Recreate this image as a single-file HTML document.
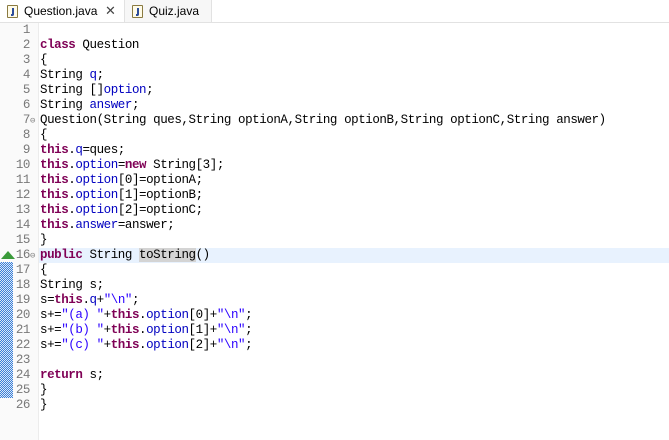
<!DOCTYPE html>
<html><head><style>
body{margin:0;width:669px;height:440px;background:#fff;overflow:hidden;position:relative;font-family:"Liberation Mono",monospace;}
.tabs{position:absolute;left:0;top:0;width:669px;height:22px;background:#fff;border-bottom:1px solid #e2e2e2;font-family:"Liberation Sans",sans-serif;font-size:12px;}
.tab{position:absolute;top:0;height:22px;line-height:22px;}
.t1{left:0;width:123px;background:#fff;}
.t2{left:124px;width:86px;background:#f7f7f7;border-left:1px solid #e2e2e2;border-right:1px solid #e2e2e2;}
.ic{position:absolute;top:5px;width:9px;height:11px;border:1px solid #8a7a40;background:#fffbe8;border-radius:1px;}
.ic:after{content:"";position:absolute;left:3px;top:2px;height:6px;border-right:2px solid #2d4d9a;border-bottom:2px solid #2d4d9a;border-radius:0 0 2px 0;width:1px;}
.gut{position:absolute;left:0;top:23px;width:38px;height:417px;background:#fafafa;border-right:1px solid #ececec;}
.range{position:absolute;left:0;top:262px;width:13px;height:136px;background-image:repeating-conic-gradient(#3b7fd6 0 25%,#dbe8f8 0 50%);background-size:2px 2px;}
.hl{position:absolute;left:39px;top:248px;width:630px;height:15px;background:#e8f2fe;}
.code{position:absolute;left:0;top:23px;font-size:12.5px;letter-spacing:-0.43px;line-height:15px;}
.ln{display:inline-block;width:30px;text-align:right;color:#787878;}
.l{height:15px;white-space:pre;}
.k{color:#7f0055;font-weight:bold;}
.f{color:#0000c0;}
.s{color:#2a00ff;}
.m{display:inline-block;width:10px;color:#888;font-size:9px;}
.sel{background:#d4d4d4;}
</style></head><body>
<div class="tabs">
<div class="tab t1"><span class="ic" style="left:7px"></span><span style="position:absolute;left:24px">Question.java</span><span style="position:absolute;left:105px;color:#444;font-size:13px">✕</span></div>
<div class="tab t2"><span class="ic" style="left:7px"></span><span style="position:absolute;left:24px">Quiz.java</span></div>
</div>
<div class="gut"></div>
<div class="hl"></div>
<div class="range"></div>
<div class="code"><div class="l"><span class="ln">1</span><span class="m"></span></div><div class="l"><span class="ln">2</span><span class="m"></span><span class="k">class</span> Question</div><div class="l"><span class="ln">3</span><span class="m"></span>{</div><div class="l"><span class="ln">4</span><span class="m"></span>String <span class="f">q</span>;</div><div class="l"><span class="ln">5</span><span class="m"></span>String []<span class="f">option</span>;</div><div class="l"><span class="ln">6</span><span class="m"></span>String <span class="f">answer</span>;</div><div class="l"><span class="ln">7</span><span class="m">⊖</span>Question(String ques,String optionA,String optionB,String optionC,String answer)</div><div class="l"><span class="ln">8</span><span class="m"></span>{</div><div class="l"><span class="ln">9</span><span class="m"></span><span class="k">this</span>.<span class="f">q</span>=ques;</div><div class="l"><span class="ln">10</span><span class="m"></span><span class="k">this</span>.<span class="f">option</span>=<span class="k">new</span> String[3];</div><div class="l"><span class="ln">11</span><span class="m"></span><span class="k">this</span>.<span class="f">option</span>[0]=optionA;</div><div class="l"><span class="ln">12</span><span class="m"></span><span class="k">this</span>.<span class="f">option</span>[1]=optionB;</div><div class="l"><span class="ln">13</span><span class="m"></span><span class="k">this</span>.<span class="f">option</span>[2]=optionC;</div><div class="l"><span class="ln">14</span><span class="m"></span><span class="k">this</span>.<span class="f">answer</span>=answer;</div><div class="l"><span class="ln">15</span><span class="m"></span>}</div><div class="l"><span class="ln">16</span><span class="m">⊖</span><span class="k">public</span> String <span class="sel">toString</span>()</div><div class="l"><span class="ln">17</span><span class="m"></span>{</div><div class="l"><span class="ln">18</span><span class="m"></span>String s;</div><div class="l"><span class="ln">19</span><span class="m"></span>s=<span class="k">this</span>.<span class="f">q</span>+<span class="s">"\n"</span>;</div><div class="l"><span class="ln">20</span><span class="m"></span>s+=<span class="s">"(a) "</span>+<span class="k">this</span>.<span class="f">option</span>[0]+<span class="s">"\n"</span>;</div><div class="l"><span class="ln">21</span><span class="m"></span>s+=<span class="s">"(b) "</span>+<span class="k">this</span>.<span class="f">option</span>[1]+<span class="s">"\n"</span>;</div><div class="l"><span class="ln">22</span><span class="m"></span>s+=<span class="s">"(c) "</span>+<span class="k">this</span>.<span class="f">option</span>[2]+<span class="s">"\n"</span>;</div><div class="l"><span class="ln">23</span><span class="m"></span></div><div class="l"><span class="ln">24</span><span class="m"></span><span class="k">return</span> s;</div><div class="l"><span class="ln">25</span><span class="m"></span>}</div><div class="l"><span class="ln">26</span><span class="m"></span>}</div></div>
<div style="position:absolute;left:1px;top:251px;width:0;height:0;border-left:7px solid transparent;border-right:7px solid transparent;border-bottom:8px solid #3a9a3a;"></div>
</body></html>
